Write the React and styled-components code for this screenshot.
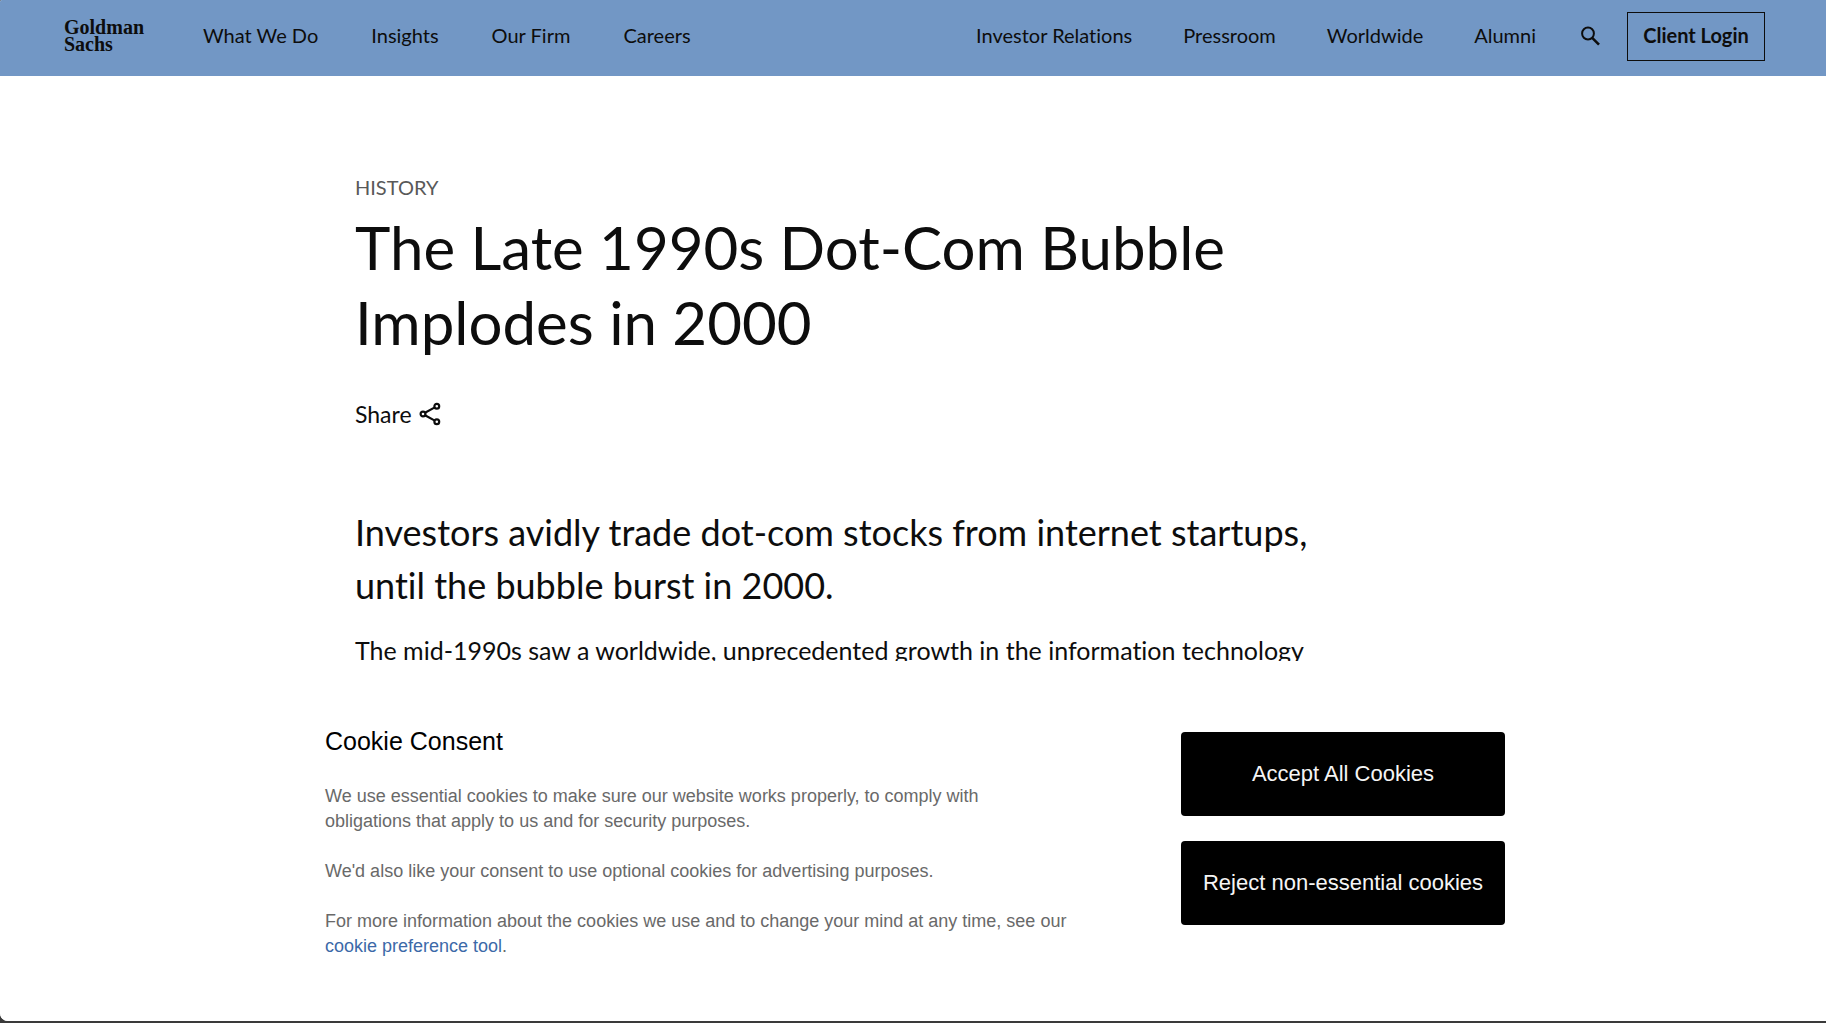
import React from "react";
import styled, { createGlobalStyle } from "styled-components";

const sans = `Lato, "Noto Sans", sans-serif`;
const arial = `"Liberation Sans", Arial, sans-serif`;

const GlobalStyle = createGlobalStyle`
  *, *::before, *::after { box-sizing: border-box; }
  body { margin: 0; background: #3a3a3a; color: #0d0d0d; font-family: ${sans}; font-variant-ligatures: none; }
  h1, h2, p { margin: 0; padding: 0; font-weight: 400; }
  a { color: inherit; text-decoration: none; }
  button { font: inherit; color: inherit; cursor: pointer; }
`;

const Frame = styled.div`
  height: 100vh;
  padding-bottom: 2px;
`;

const Page = styled.div`
  display: flex;
  flex-direction: column;
  height: 100%;
  overflow: hidden;
  background: #ffffff;
  border-radius: 2px 0 0 8px;
`;

const Header = styled.header`
  display: flex;
  align-items: center;
  flex: none;
  height: 76px;
  padding: 0 61px 4px 64px;
  background: #7297c5;
`;

const Logo = styled.a`
  width: 139px;
  font: 700 20px/17px "Liberation Serif", "Times New Roman", serif;
`;

const Nav = styled.nav`
  display: flex;
  align-items: center;
  gap: ${(p) => p.$gap}px;
  margin-left: ${(p) => (p.$end ? "auto" : "0")};
  padding-bottom: 2px;
  font-size: 20px;
  line-height: 24px;
  white-space: nowrap;
`;

const Tools = styled.div`
  display: flex;
  align-items: center;
  gap: 27px;
  margin-left: 45px;
`;

const IconButton = styled.button`
  display: flex;
  align-items: center;
  gap: 7px;
  padding: 0;
  border: 0;
  background: none;
  font-size: 23px;
  line-height: 28px;
`;

const LoginButton = styled.button`
  width: 138px;
  height: 49px;
  padding: 0 0 2px;
  border: 1px solid #0d0d0d;
  background: none;
  font-size: 20px;
  font-weight: 700;
`;

const Main = styled.main`
  flex: 1;
  min-height: 0;
  overflow: hidden;
  padding: 97px 24px 0;
`;

const Article = styled.article`
  max-width: 1116px;
  margin: 0 auto;
`;

const Eyebrow = styled.p`
  color: #595959;
  font-size: 20px;
  line-height: 28px;
`;

const Title = styled.h1`
  max-width: 980px;
  margin: 9px 0 40px;
  font-size: 60px;
  line-height: 75px;
`;

const Lead = styled.p`
  max-width: 980px;
  margin: 78px 0 19px;
  font-size: 36px;
  line-height: 53px;
`;

const Body = styled.p`
  max-width: 980px;
  font-size: 25px;
  line-height: 38px;
`;

const Banner = styled.section`
  flex: none;
  min-height: 360px;
  padding: 64px 24px 48px;
  background: #ffffff;
  font-family: ${arial};
`;

const BannerInner = styled.div`
  display: flex;
  justify-content: space-between;
  max-width: 1184px;
  margin: 0 auto;
  padding-left: 4px;
`;

const Notice = styled.div`
  display: flex;
  flex-direction: column;
  gap: 25px;
  max-width: 744px;
  color: #696969;
  font-size: 18px;
  line-height: 25px;
`;

const NoticeTitle = styled.h2`
  margin-bottom: 2px;
  color: #000000;
  font-size: 25px;
  line-height: 32px;
`;

const PreferenceLink = styled.a`
  color: #3c69a8;
`;

const Choices = styled.div`
  display: flex;
  flex-direction: column;
  gap: 25px;
  width: 324px;
  padding-top: 7px;
`;

const ChoiceButton = styled.button`
  height: 84px;
  padding: 0 8px;
  border: 0;
  border-radius: 4px;
  background: #000000;
  color: #f5f5f5;
  font-size: 22px;
  white-space: nowrap;
`;

const SearchIcon = () => (
  <svg width="19" height="20" viewBox="0 0 19 20" fill="none" stroke="#0d0d0d" aria-hidden="true">
    <circle cx="7" cy="7.5" r="5.9" strokeWidth="2" />
    <path d="M11.2 11.8 18 18.6" strokeWidth="2.6" />
  </svg>
);

const ShareIcon = () => (
  <svg width="22" height="24" viewBox="0 0 22 24" fill="none" stroke="#0d0d0d" strokeWidth="2.2" aria-hidden="true">
    <circle cx="4" cy="12" r="2.4" />
    <circle cx="17.8" cy="4.2" r="2.4" />
    <circle cx="17.8" cy="19.8" r="2.4" />
    <path d="M6 10.8 15.8 5.4M6 13.2 15.8 18.6" />
  </svg>
);

const primary = ["What We Do", "Insights", "Our Firm", "Careers"];
const secondary = ["Investor Relations", "Pressroom", "Worldwide", "Alumni"];

export default function App() {
  return (
    <Frame>
      <GlobalStyle />
      <Page>
        <Header>
          <Logo href="#">Goldman<br />Sachs</Logo>
          <Nav $gap={53} aria-label="Primary">
            {primary.map((t) => <a href="#" key={t}>{t}</a>)}
          </Nav>
          <Nav $gap={51} $end aria-label="Secondary">
            {secondary.map((t) => <a href="#" key={t}>{t}</a>)}
          </Nav>
          <Tools>
            <IconButton type="button" aria-label="Search"><SearchIcon /></IconButton>
            <LoginButton type="button">Client Login</LoginButton>
          </Tools>
        </Header>
        <Main>
          <Article>
            <Eyebrow>HISTORY</Eyebrow>
            <Title>The Late 1990s Dot-Com Bubble Implodes in 2000</Title>
            <IconButton type="button">Share<ShareIcon /></IconButton>
            <Lead>Investors avidly trade dot-com stocks from internet startups, until the bubble burst in 2000.</Lead>
            <Body>The mid-1990s saw a worldwide, unprecedented growth in the information technology</Body>
          </Article>
        </Main>
        <Banner aria-labelledby="consent-title">
          <BannerInner>
            <Notice>
              <NoticeTitle id="consent-title">Cookie Consent</NoticeTitle>
              <p>We use essential cookies to make sure our website works properly, to comply with obligations that apply to us and for security purposes.</p>
              <p>We'd also like your consent to use optional cookies for advertising purposes.</p>
              <p>For more information about the cookies we use and to change your mind at any time, see our <PreferenceLink href="#">cookie preference tool</PreferenceLink>.</p>
            </Notice>
            <Choices>
              <ChoiceButton type="button">Accept All Cookies</ChoiceButton>
              <ChoiceButton type="button">Reject non-essential cookies</ChoiceButton>
            </Choices>
          </BannerInner>
        </Banner>
      </Page>
    </Frame>
  );
}
